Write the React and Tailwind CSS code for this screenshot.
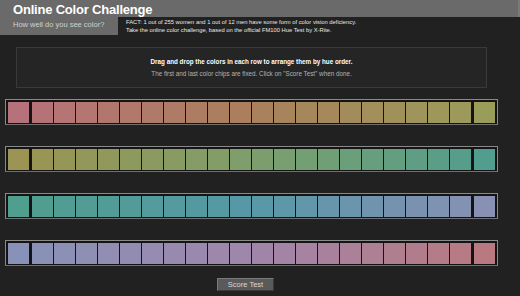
import React from 'react';

// key colours for each tray: start, middle, end
const ROWS = [
  [[182, 114, 122], [170, 128, 92], [154, 156, 90]],
  [[156, 148, 82], [126, 158, 108], [82, 158, 142]],
  [[80, 158, 142], [86, 152, 166], [136, 144, 180]],
  [[136, 146, 184], [160, 134, 170], [184, 122, 128]],
];

const CHIPS = 22;

function mix(a, b, t) {
  return a.map((v, i) => Math.round(v + (b[i] - v) * t));
}

function chipColors([start, mid, end]) {
  const out = [];
  for (let i = 0; i < CHIPS; i++) {
    const t = i / (CHIPS - 1);
    const c = t < 0.5 ? mix(start, mid, t * 2) : mix(mid, end, (t - 0.5) * 2);
    out.push(`rgb(${c[0]},${c[1]},${c[2]})`);
  }
  return out;
}

function Chip({ color }) {
  return <div className="w-[21px] h-[21px] shrink-0" style={{ backgroundColor: color }} />;
}

function Tray({ keys }) {
  const colors = chipColors(keys);
  const first = colors[0];
  const last = colors[colors.length - 1];
  const middle = colors.slice(1, -1);
  return (
    <div className="ml-[5px] w-[493px] h-[26px] border border-[#8a8a8a] border-b-[#707070] bg-[#141414] pt-[2px] px-[2px] flex">
      <Chip color={first} />
      <div className="ml-[3px] flex gap-px">
        {middle.map((c, i) => (
          <Chip key={i} color={c} />
        ))}
      </div>
      <div className="ml-[3px]">
        <Chip color={last} />
      </div>
    </div>
  );
}

export default function App() {
  return (
    <div
      className="w-[520px] h-[296px] bg-[#212121] overflow-hidden flex flex-col"
      style={{ fontFamily: '"Liberation Sans", Arial, sans-serif' }}
    >
      {/* Header */}
      <div className="h-[17px] shrink-0 bg-[#6a6a6a] border-r-2 border-r-[#7a7a7a] pl-[13px] flex items-center">
        <h1 className="text-[13px] leading-none font-bold tracking-[-0.2px] text-white mt-[2px]">
          Online Color Challenge
        </h1>
      </div>
      <div className="flex h-[18px] shrink-0">
        <div className="w-[118px] bg-[#6a6a6a] pl-[13px] pt-[3px]">
          <p className="text-[7.5px] leading-[9px] text-[#d0d0d0]">How well do you see color?</p>
        </div>
        <div className="pl-[8px] pt-[1px] text-[5.8px] leading-[8px] text-[#e8e8e8]">
          <p>FACT: 1 out of 255 women and 1 out of 12 men have some form of color vision deficiency.</p>
          <p>Take the online color challenge, based on the official FM100 Hue Test by X-Rite.</p>
        </div>
      </div>

      {/* Instructions */}
      <div className="ml-[16px] mt-[12px] w-[471px] h-[41px] shrink-0 border border-[#3a3a3a] bg-[#252525] flex flex-col items-center pt-[10px]">
        <p className="text-[6.3px] leading-[8px] font-bold text-white">
          Drag and drop the colors in each row to arrange them by hue order.
        </p>
        <p className="mt-[4px] text-[6.3px] leading-[8px] text-[#b4b4b4]">
          The first and last color chips are fixed. Click on "Score Test" when done.
        </p>
      </div>

      {/* Trays */}
      <div className="mt-[11px] flex flex-col gap-[21px] shrink-0">
        {ROWS.map((keys, i) => (
          <Tray key={i} keys={keys} />
        ))}
      </div>

      {/* Button */}
      <div className="mt-[12px] ml-[217px] flex">
        <button className="block w-[57px] h-[13px] bg-[#5a5a5a] border border-[#7a7a7a] border-r-[#3a3a3a] border-b-[#3a3a3a] text-[7.5px] leading-none text-[#d8d8d8]">
          Score Test
        </button>
      </div>
    </div>
  );
}
